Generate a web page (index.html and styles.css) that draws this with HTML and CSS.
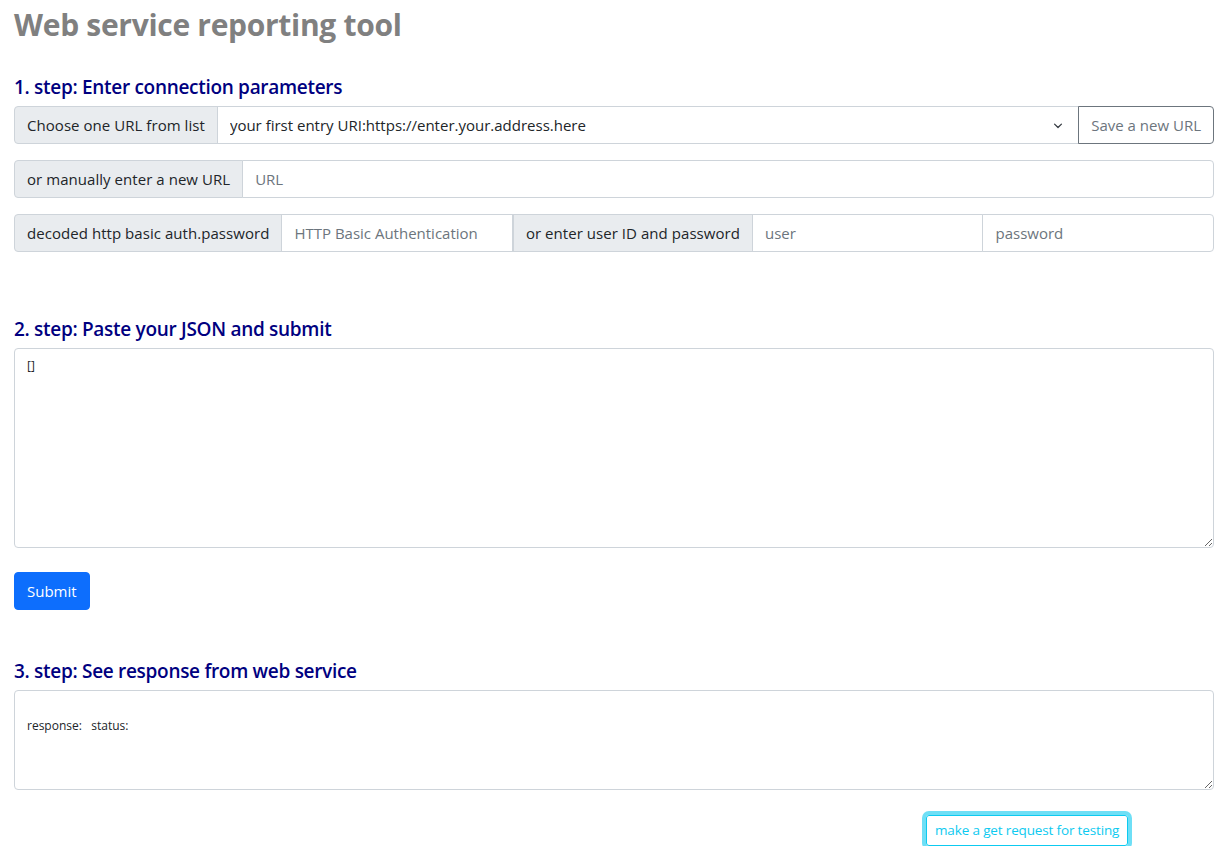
FILE: index.html
```html
<!DOCTYPE html>
<html lang="en">
<head>
<meta charset="utf-8">
<title>Web service reporting tool</title>
<link rel="stylesheet" href="styles.css">
</head>
<body>
<div class="container">
  <h1 class="title">Web service reporting tool</h1>

  <h5 class="step">1. step: Enter connection parameters</h5>
  <div class="input-group">
    <span class="addon">Choose one URL from list</span>
    <select class="control select">
      <option>your first entry URI:https://enter.your.address.here</option>
    </select>
    <button class="btn btn-outline-secondary" type="button">Save a new URL</button>
  </div>
  <div class="input-group">
    <span class="addon">or manually enter a new URL</span>
    <input class="control" type="text" placeholder="URL">
  </div>
  <div class="input-group">
    <span class="addon">decoded http basic auth.password</span>
    <input class="control" type="text" placeholder="HTTP Basic Authentication">
    <span class="addon">or enter user ID and password</span>
    <input class="control" type="text" placeholder="user">
    <input class="control" type="password" placeholder="password">
  </div>

  <h5 class="step step-2">2. step: Paste your JSON and submit</h5>
  <textarea class="area area-json">[]</textarea>
  <button class="btn btn-primary submit" type="button">Submit</button>

  <h5 class="step step-3">3. step: See response from web service</h5>
  <textarea class="area area-resp">&#10;&#10;response:   status:</textarea>

  <div class="row">
    <div class="col-offset">
      <button class="btn btn-sm btn-outline-info focused" type="button">make a get request for testing</button>
    </div>
  </div>
</div>
</body>
</html>
```

FILE: styles.css
```css
* { box-sizing: border-box; }
html, body { margin: 0; padding: 0; background: #fff; }
body {
  font-family: "Segoe UI", "Open Sans", "Noto Sans", sans-serif;
  font-size: 15px;
  line-height: 1.5;
  color: #212529;
}
.container {
  width: 1200px;
  margin-left: 14px;
}
.title {
  margin: 0;
  padding-top: 7px;
  font-size: 30px;
  font-weight: 700;
  letter-spacing: -0.3px;
  line-height: 36px;
  color: #808080;
}
.step {
  margin: 32px 0 7px;
  font-size: 19px;
  font-weight: 600;
  letter-spacing: -0.3px;
  line-height: 24px;
  color: #000080;
}
.step-2 { margin-top: 65px; }
.step-3 { margin-top: 49px; }
.input-group {
  display: flex;
  align-items: stretch;
  width: 100%;
  margin-bottom: 16px;
}
.addon {
  display: flex;
  align-items: center;
  padding: 6px 12px;
  font-size: 15px;
  letter-spacing: 0.05px;
  line-height: 24px;
  color: #212529;
  white-space: nowrap;
  background: #e9ecef;
  border: 1px solid #ced4da;
}
.control {
  flex: 1 1 auto;
  width: 1%;
  min-width: 0;
  padding: 6px 12px;
  font-family: inherit;
  font-size: 15px;
  line-height: 24px;
  color: #212529;
  background: #fff;
  border: 1px solid #ced4da;
  margin-left: -1px;
  outline: none;
}
.control::placeholder { color: #6c757d; }
.input-group > :first-child { border-radius: 4px 0 0 4px; margin-left: 0; }
.input-group > :last-child { border-radius: 0 4px 4px 0; }
.select {
  appearance: none;
  -webkit-appearance: none;
  padding-right: 36px;
  background-image: url("data:image/svg+xml,%3csvg xmlns='http://www.w3.org/2000/svg' viewBox='0 0 16 16'%3e%3cpath fill='none' stroke='%23343a40' stroke-linecap='round' stroke-linejoin='round' stroke-width='1.8' d='M3 6l5 5 5-5'/%3e%3c/svg%3e");
  background-repeat: no-repeat;
  background-position: right 13px center;
  background-size: 14px 11px;
}
.btn {
  display: inline-block;
  font-family: inherit;
  font-size: 15px;
  font-weight: 400;
  line-height: 24px;
  padding: 6px 12px;
  border: 1px solid transparent;
  border-radius: 4px;
  background: transparent;
  cursor: pointer;
}
.btn-outline-secondary {
  color: #6c757d;
  border-color: #6c757d;
  margin-left: -1px;
  position: relative;
}
.btn-primary {
  color: #fff;
  background: #0d6efd;
  border-color: #0d6efd;
}
.area {
  display: block;
  width: 100%;
  padding: 6px 12px;
  font-family: inherit;
  font-size: 12px;
  line-height: 18px;
  color: #212529;
  background: #fff;
  border: 1px solid #ced4da;
  border-radius: 4px;
  resize: vertical;
}
.area-json { height: 200px; padding-top: 8px; }
.area-resp { height: 100px; padding-top: 8px; }
.submit { margin-top: 24px; }
.row {
  display: flex;
  margin-top: 25px;
}
.col-offset {
  margin-left: 75%;
  padding-left: 12px;
}
.btn-sm {
  font-size: 13.5px;
  letter-spacing: -0.15px;
  line-height: 21px;
  padding: 4px 8px;
  border-radius: 3px;
}
.btn-outline-info {
  color: #0dcaf0;
  border-color: #0dcaf0;
}
.focused {
  box-shadow: 0 0 0 4px rgba(13, 202, 240, 0.6);
}
```
